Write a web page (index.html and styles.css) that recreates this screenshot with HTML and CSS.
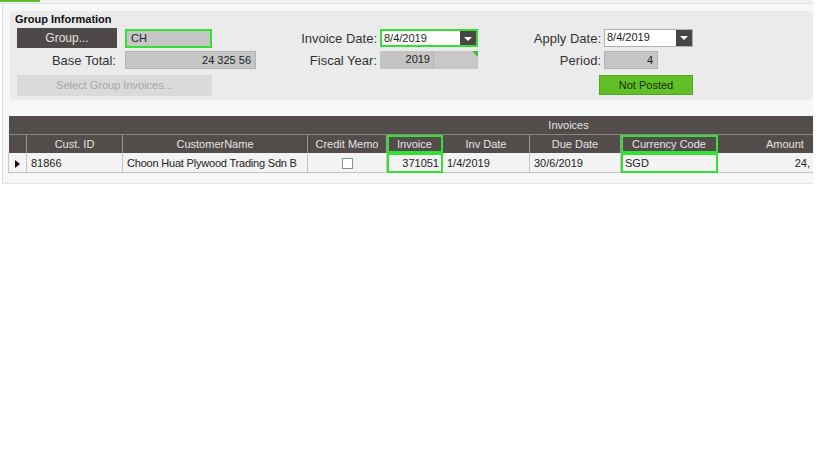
FILE: index.html
```html
<!DOCTYPE html>
<html lang="en">
<head>
    <meta charset="UTF-8">
    <title>Group Information</title>
    <link rel="stylesheet" href="styles.css">
</head>
<body>

<div class="tabbar"><span class="tab"></span></div>

<div class="panel">
    <div class="group">
        <div class="group-title">Group Information</div>
        <div class="group-grid">
            <!-- row 1 -->
            <button class="btn-dark">Group...</button>
            <div class="field field-gray field-hl w87">CH</div>
            <label class="lbl">Invoice Date:</label>
            <div class="combo field-hl"><span class="combo-text">8/4/2019</span><span class="drop"></span></div>
            <label class="lbl">Apply Date:</label>
            <div class="combo"><span class="combo-text">8/4/2019</span><span class="drop"></span></div>

            <!-- row 2 -->
            <label class="lbl lbl-first">Base Total:</label>
            <div class="field field-gray num">24 325 56</div>
            <label class="lbl">Fiscal Year:</label>
            <div class="split">
                <span class="split-left num">2019</span>
                <span class="split-right"></span>
            </div>
            <label class="lbl">Period:</label>
            <div class="field field-gray num w54">4</div>

            <!-- row 3 -->
            <button class="btn-disabled">Select Group Invoices...</button>
            <div class="status">Not Posted</div>
        </div>
    </div>

    <div class="grid-wrap">
        <table class="grid">
            <colgroup>
                <col style="width:18px">
                <col style="width:96px">
                <col style="width:185px">
                <col style="width:79px">
                <col style="width:56px">
                <col style="width:87px">
                <col style="width:91px">
                <col style="width:97px">
                <col style="width:96px">
                <col style="width:315px">
            </colgroup>
            <tr class="title-row">
                <th colspan="10">Invoices</th>
            </tr>
            <tr class="head-row">
                <th></th>
                <th>Cust. ID</th>
                <th>CustomerName</th>
                <th>Credit Memo</th>
                <th class="hl">Invoice</th>
                <th>Inv Date</th>
                <th>Due Date</th>
                <th class="hl">Currency Code</th>
                <th class="amount-head">Amount</th>
                <th></th>
            </tr>
            <tr class="data-row">
                <td class="row-head"><span class="arrow"></span></td>
                <td>81866</td>
                <td class="name">Choon Huat Plywood Trading Sdn B</td>
                <td class="center"><span class="check"></span></td>
                <td class="num hl">371051</td>
                <td>1/4/2019</td>
                <td>30/6/2019</td>
                <td class="hl">SGD</td>
                <td class="amount">24,</td>
                <td></td>
            </tr>
        </table>
    </div>
</div>

</body>
</html>
```

FILE: styles.css
```css
body {
    margin: 0;
    background: #ffffff;
    font-family: 'Liberation Sans', Arial, sans-serif;
    color: #222;
}
.tabbar {
    width: 813px;
    height: 3px;
    background: #efefef;
    border-bottom: 1px solid #e2e2e2;
}
.tab {
    display: block;
    width: 40px;
    height: 2px;
    background: #5cbf2a;
}
.panel {
    width: 811px;
    margin-left: 2px;
    border-left: 1px solid #dedede;
    border-bottom: 1px solid #e4e4e4;
    background: #f7f7f7;
    padding: 7px 0 10px 5px;
    box-sizing: border-box;
    overflow: hidden;
}
.group {
    margin-left: 2px;
    width: 803px;
    background: #ebebeb;
    border-radius: 4px;
    padding: 2px 0 2px 5px;
    box-sizing: border-box;
}
.group-title {
    font-size: 11px;
    font-weight: bold;
    line-height: 13px;
    color: #111;
    margin-bottom: 2px;
}
.group-grid {
    display: grid;
    grid-template-columns: 108px 131px 124px 98px 126px 89px;
    grid-template-rows: 20px 20px 26px;
    row-gap: 2px;
    margin-left: 2px;
    align-items: center;
}
.lbl {
    font-size: 13px;
    color: #333;
    text-align: right;
    padding-right: 3px;
}
.lbl-first {
    padding-right: 9px;
}
.btn-dark {
    width: 100px;
    height: 20px;
    border: none;
    background: #4d4948;
    color: #e2e2e2;
    font-family: inherit;
    font-size: 12px;
    padding: 0;
}
.btn-disabled {
    grid-column: 1 / 3;
    width: 195px;
    height: 21px;
    border: none;
    background: #dadada;
    color: #a6a6a6;
    font-family: inherit;
    font-size: 11px;
    padding: 0;
}
.field {
    height: 18px;
    font-size: 11px;
    line-height: 16px;
    padding: 0 4px;
    box-sizing: border-box;
    border: 1px solid #b4b4b4;
}
.field-gray {
    background: #c6c6c6;
}
.field-hl {
    border: 2px solid #33e033;
}
.field.field-hl {
    height: 19px;
    line-height: 15px;
}
.num {
    text-align: right;
}
.w87 {
    width: 87px;
}
.w54 {
    width: 54px;
}
.combo {
    display: flex;
    height: 18px;
    background: #ffffff;
    border: 1px solid #b0b0b0;
    box-sizing: border-box;
    font-size: 11px;
}
.combo.field-hl {
    border: 2px solid #33e033;
}
.combo-text {
    flex: 1;
    line-height: 15px;
    padding-left: 2px;
}
.drop {
    width: 16px;
    background: #4a4545;
    position: relative;
}
.drop::after {
    content: "";
    position: absolute;
    left: 4px;
    top: 6px;
    border-left: 4px solid transparent;
    border-right: 4px solid transparent;
    border-top: 4px solid #ffffff;
}
.split {
    display: flex;
    height: 18px;
    font-size: 11px;
    line-height: 17px;
    position: relative;
}
.split-left {
    width: 50px;
    background: #c4c4c4;
    padding-right: 3px;
    border-right: 1px solid #b3b3b3;
}
.split-right {
    flex: 1;
    background: #c8c8c8;
}
.split::after {
    content: "";
    position: absolute;
    right: 0;
    top: 0;
    border-left: 6px solid transparent;
    border-top: 6px solid #2fbf2f;
}
.status {
    grid-column: 6;
    justify-self: end;
    width: 94px;
    height: 20px;
    background: #63bf28;
    border: 1px solid #55a522;
    box-sizing: border-box;
    font-size: 11px;
    line-height: 18px;
    text-align: center;
    color: #16300a;
}
.grid-wrap {
    margin-top: 16px;
    width: 1120px;
}
.grid {
    table-layout: fixed;
    width: 1120px;
    border-collapse: collapse;
    font-size: 11px;
}
.grid th {
    font-weight: normal;
    color: #e4e4e4;
    background: #524d4b;
    padding: 0;
    white-space: nowrap;
}
.title-row th {
    height: 18px;
    border-bottom: 1px solid #8a8685;
    text-align: center;
}
.head-row th {
    height: 18px;
    border-left: 1px solid #9a9695;
    text-align: center;
}
.head-row th:first-child {
    border-left: none;
}
.head-row th.amount-head {
    text-align: left;
    padding-left: 48px;
}
.data-row td {
    height: 19px;
    background: #f3f3f3;
    border-left: 1px solid #c4c4c4;
    border-bottom: 1px solid #c4c4c4;
    padding: 0 4px;
    white-space: nowrap;
    overflow: hidden;
    color: #222;
}
.data-row td.name {
    letter-spacing: -0.2px;
}
.data-row td.num {
    text-align: right;
    padding-right: 3px;
}
.data-row td.amount {
    text-align: right;
    padding-right: 3px;
}
.data-row td.center {
    text-align: center;
}
.grid .hl {
    outline: 2px solid #33e033;
    outline-offset: -2px;
}
.row-head {
    text-align: center;
}
.arrow {
    display: inline-block;
    border-top: 4px solid transparent;
    border-bottom: 4px solid transparent;
    border-left: 5px solid #111;
    vertical-align: middle;
}
.check {
    display: inline-block;
    width: 9px;
    height: 9px;
    background: #ffffff;
    border: 1px solid #8e8e8e;
    vertical-align: middle;
}
```
